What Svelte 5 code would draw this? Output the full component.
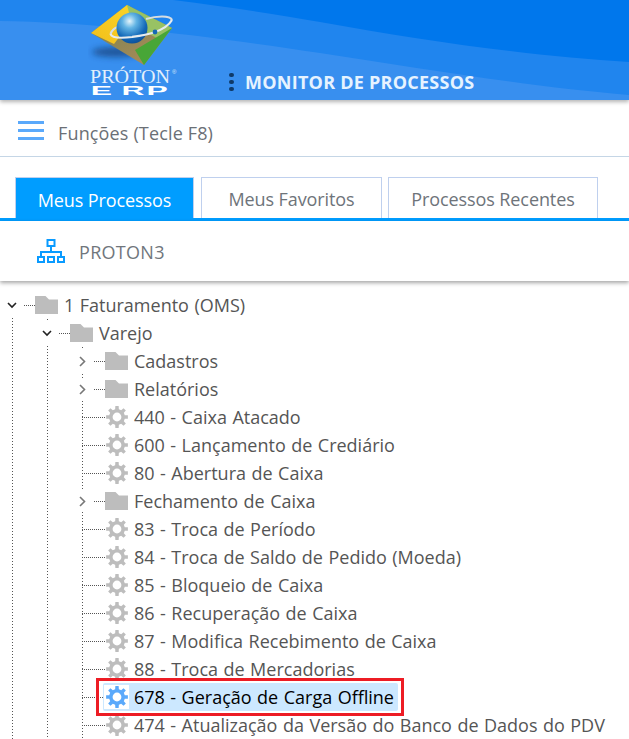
<script>
  function gearPath(cx, cy, rOuter, rRoot, rHole, teeth) {
    let d = '';
    const step = (Math.PI * 2) / teeth;
    for (let i = 0; i < teeth; i++) {
      const a = i * step - Math.PI / 2;
      const pts = [
        [rRoot, a - step * 0.3],
        [rOuter, a - step * 0.19],
        [rOuter, a + step * 0.19],
        [rRoot, a + step * 0.3]
      ];
      for (const [r, t] of pts) {
        d += (d ? 'L' : 'M') + (cx + r * Math.cos(t)).toFixed(2) + ' ' + (cy + r * Math.sin(t)).toFixed(2);
      }
    }
    d += 'Z';
    d += `M${cx + rHole} ${cy}A${rHole} ${rHole} 0 1 0 ${cx - rHole} ${cy}A${rHole} ${rHole} 0 1 0 ${cx + rHole} ${cy}Z`;
    return d;
  }
  const gear = gearPath(11, 11, 11, 8, 4.4, 8);

  const items = [
    { type: 'folder', closed: true, text: 'Cadastros' },
    { type: 'folder', closed: true, text: 'Relatórios' },
    { type: 'gear', text: '440 - Caixa Atacado' },
    { type: 'gear', text: '600 - Lançamento de Crediário' },
    { type: 'gear', text: '80 - Abertura de Caixa' },
    { type: 'folder', closed: true, text: 'Fechamento de Caixa' },
    { type: 'gear', text: '83 - Troca de Período' },
    { type: 'gear', text: '84 - Troca de Saldo de Pedido (Moeda)' },
    { type: 'gear', text: '85 - Bloqueio de Caixa' },
    { type: 'gear', text: '86 - Recuperação de Caixa' },
    { type: 'gear', text: '87 - Modifica Recebimento de Caixa' },
    { type: 'gear', text: '88 - Troca de Mercadorias' },
    { type: 'gear', selected: true, text: '678 - Geração de Carga Offline' },
    { type: 'gear', text: '474 - Atualização da Versão do Banco de Dados do PDV' }
  ];
</script>

{#snippet folderIcon()}
  <svg class="folder" viewBox="0 0 23 18" aria-hidden="true">
    <path d="M0 0H10.5L14 3.5H23V18H0Z" />
  </svg>
{/snippet}

{#snippet chevron(open)}
  <span class="toggle">
    {#if open}
      <svg width="10" height="7" viewBox="0 0 10 7" aria-hidden="true"><path class="chev-open" d="M1 1L5 5L9 1" /></svg>
    {:else}
      <svg width="7" height="11" viewBox="0 0 7 11" aria-hidden="true"><path class="chev-closed" d="M1 1L5.5 5.5L1 10" /></svg>
    {/if}
  </span>
{/snippet}

<div class="page">
  <header class="top">
    <svg class="wave" viewBox="0 0 629 100" preserveAspectRatio="none" aria-hidden="true">
      <path d="M0 21C100 22 220 38 320 53C430 70 540 88 629 95V0H0Z" fill="#2085ee" />
      <path d="M173 0C230 7 280 15 320 22C430 42 540 57 629 62V0Z" fill="#0077ec" />
    </svg>

    <svg class="logo" width="90" height="100" viewBox="88 0 90 100" role="img">
      <defs>
        <radialGradient id="globe" cx="0.42" cy="0.28" r="0.75">
          <stop offset="0" stop-color="#e4f4fb" />
          <stop offset="0.3" stop-color="#62b4e4" />
          <stop offset="0.72" stop-color="#1368b8" />
          <stop offset="1" stop-color="#0d4f96" />
        </radialGradient>
        <linearGradient id="tan" x1="0" y1="0" x2="1" y2="1">
          <stop offset="0" stop-color="#6d8052" />
          <stop offset="1" stop-color="#b58d58" />
        </linearGradient>
        <linearGradient id="yellow" x1="0" y1="1" x2="1" y2="0">
          <stop offset="0" stop-color="#f2bf1a" />
          <stop offset="1" stop-color="#fcd52a" />
        </linearGradient>
        <filter id="soft" x="-30%" y="-80%" width="160%" height="260%"><feGaussianBlur stdDeviation="3" /></filter>
      </defs>
      <ellipse cx="116" cy="52" rx="24" ry="5" fill="#0e2f5e" opacity="0.6" filter="url(#soft)" />
      <path d="M91 33L127 5L172 28L144 65Z" fill="url(#tan)" />
      <path d="M91 33L127 5L138 12L114 44Z" fill="url(#yellow)" />
      <path d="M127 5L172 28L160 40L132 24Z" fill="#98c264" />
      <path d="M135 50L172 28L144 65Z" fill="#48a637" />
      <path d="M110.5 34C112 30 114 28 118 27M146 19C156 16 170 15 172 20" fill="none" stroke="#d6dde2" stroke-width="2.2" />
      <circle cx="132" cy="28" r="15.5" fill="url(#globe)" />
      <path d="M110.5 34C112 39 124 38 132 37C145 35 165 32 172 20" fill="none" stroke="#e6ebee" stroke-width="2.2" />
      <circle cx="155" cy="32" r="2.4" fill="#1569b5" />
      <text x="90" y="83" class="logo-proton" textLength="80" lengthAdjust="spacingAndGlyphs">PRÓTON</text>
      <text x="172" y="74" class="logo-reg">®</text>
      <g transform="scale(2.45 1)">
        <text x="37 49.6 59.8" y="95" class="logo-erp">ERP</text>
      </g>
    </svg>

    <div class="title">
      <span class="kebab"><i></i><i></i><i></i></span>
      <span class="title-text">MONITOR DE PROCESSOS</span>
    </div>
  </header>

  <div class="funcoes">
    <span class="burger"><i></i><i></i><i></i></span>
    <span class="funcoes-text">Funções (Tecle F8)</span>
  </div>

  <nav class="tabs">
    <div class="tab tab-active">Meus Processos</div>
    <div class="tab tab-fav">Meus Favoritos</div>
    <div class="tab tab-rec">Processos Recentes</div>
  </nav>

  <div class="server">
    <svg class="org" width="28" height="24" viewBox="0 0 28 24" aria-hidden="true">
      <g fill="none" stroke="#0a9bff" stroke-width="2">
        <rect x="10.5" y="1" width="7" height="6" />
        <path d="M14 7V13M4 18V13H24V18" />
        <rect x="1" y="18" width="6" height="5" />
        <rect x="11" y="18" width="6" height="5" />
        <rect x="21" y="18" width="6" height="5" />
      </g>
    </svg>
    <span class="server-text">PROTON3</span>
  </div>

  <div class="tree">
    <ul class="level level-1">
      <li>
        <div class="row">
          {@render chevron(true)}
          <span class="dots short"></span>
          {@render folderIcon()}
          <span class="label">1 Faturamento (OMS)</span>
        </div>
        <ul class="level level-2">
          <li>
            <div class="row">
              {@render chevron(true)}
              <span class="dots short"></span>
              {@render folderIcon()}
              <span class="label">Varejo</span>
            </div>
            <ul class="level level-3">
              {#each items as item}
                <li>
                  <div class="row">
                    {#if item.type === 'folder'}
                      {@render chevron(false)}
                      <span class="dots short"></span>
                      {@render folderIcon()}
                      <span class="label">{item.text}</span>
                    {:else}
                      <span class="spacer"></span>
                      <span class="dots long" class:dots-sel={item.selected}></span>
                      <span class="leaf" class:selected={item.selected}>
                        <span class="gear-box">
                          <svg class="gear" width="22" height="22" viewBox="0 0 22 22" aria-hidden="true">
                            <path d={gear} fill-rule="evenodd" />
                          </svg>
                        </span>
                        <span class="label leaf-label">{item.text}</span>
                      </span>
                    {/if}
                  </div>
                </li>
              {/each}
            </ul>
          </li>
        </ul>
      </li>
    </ul>
  </div>
</div>

<style>
  :global(body) {
    margin: 0;
    background: #fff;
  }
  .page {
    width: 629px;
    height: 739px;
    overflow: hidden;
    font-family: "Open Sans", "Noto Sans", sans-serif;
    color: #555;
    background: #fff;
  }
  .top {
    position: relative;
    height: 100px;
    background: #388fef;
    display: flex;
    align-items: flex-end;
    box-shadow: 0 2px 4px rgba(0, 0, 0, 0.3);
    z-index: 2;
  }
  .wave {
    position: absolute;
    inset: 0;
    width: 100%;
    height: 100%;
  }
  .logo {
    position: relative;
    margin-left: 88px;
    flex: none;
    display: block;
  }
  .logo-proton {
    font-family: "Liberation Serif", serif;
    font-size: 19px;
    fill: #e4effb;
  }
  .logo-reg {
    font-family: "Liberation Sans", sans-serif;
    font-size: 6px;
    fill: #dfeafa;
  }
  .logo-erp {
    font-family: "Liberation Sans", sans-serif;
    font-weight: 700;
    font-size: 13px;
    fill: #fff;
  }
  .title {
    position: relative;
    display: flex;
    align-items: center;
    margin-left: 51px;
    height: 36px;
  }
  .kebab {
    display: flex;
    flex-direction: column;
    gap: 2.5px;
    width: 16px;
    align-items: flex-start;
  }
  .kebab i {
    width: 4.5px;
    height: 4.5px;
    border-radius: 50%;
    background: #0f3a68;
  }
  .title-text {
    font-weight: 700;
    font-size: 18px;
    letter-spacing: 0.25px;
    color: #e6f3ff;
    white-space: nowrap;
  }
  .funcoes {
    height: 51px;
    padding-top: 5px;
    border-bottom: 1px solid #c5d6e6;
    display: flex;
    align-items: center;
    padding-left: 18px;
  }
  .burger {
    display: flex;
    flex-direction: column;
    gap: 5px;
    width: 26px;
    margin-right: 14px;
  }
  .burger i {
    height: 3px;
    background: #5aa9fb;
  }
  .funcoes-text {
    font-size: 18px;
    letter-spacing: 0.15px;
    color: #6b7076;
    padding-top: 5px;
  }
  .tabs {
    height: 41px;
    margin-top: 20px;
    border-bottom: 3px solid #009dff;
    display: flex;
    padding-left: 15px;
    gap: 7px;
  }
  .tab {
    box-sizing: border-box;
    height: 41px;
    border: 1px solid #bfd0ee;
    border-bottom: 0;
    display: flex;
    align-items: center;
    justify-content: center;
    font-size: 18px;
    letter-spacing: -0.1px;
    color: #6e747a;
    padding-top: 1px;
  }
  .tab-active {
    width: 179px;
    background: #009dff;
    color: #fff;
    padding-top: 3px;
  }
  .tab-fav {
    width: 181px;
  }
  .tab-rec {
    width: 210px;
    margin-left: -1px;
  }
  .server {
    height: 60px;
    display: flex;
    align-items: center;
    padding-left: 37px;
    box-shadow: 0 2px 4px rgba(0, 0, 0, 0.35);
    position: relative;
    z-index: 1;
  }
  .server-text {
    font-size: 18px;
    letter-spacing: 0.3px;
    color: #70767c;
    margin-left: 14px;
    padding-top: 2px;
  }
  .tree {
    padding-top: 10px;
  }
  ul {
    list-style: none;
    margin: 0;
    padding: 0;
  }
  .level {
    background-image: repeating-linear-gradient(to bottom, #555 0 1px, transparent 1px 3px);
    background-repeat: no-repeat;
    background-size: 1px 100%;
    background-position: 12px 0;
  }
  .level-1 {
    background-position: 12px 24px;
  }
  .level-2,
  .level-3 {
    padding-left: 35px;
    background-position: 47px 0;
  }
  .row {
    height: 28px;
    display: flex;
    align-items: center;
  }
  .toggle {
    width: 24px;
    height: 22px;
    flex: none;
    display: flex;
    align-items: center;
    justify-content: center;
    background: #fff;
  }
  .chev-open {
    fill: none;
    stroke: #222;
    stroke-width: 1.6;
  }
  .chev-closed {
    fill: none;
    stroke: #777;
    stroke-width: 1.6;
  }
  .spacer {
    width: 12px;
    flex: none;
  }
  .dots {
    flex: none;
    height: 1px;
    background-image: repeating-linear-gradient(to right, #555 0 1px, transparent 1px 2px);
  }
  .short {
    width: 11px;
  }
  .long {
    width: 23px;
  }
  .dots-sel {
    width: 21px;
  }
  .folder {
    width: 23px;
    height: 18px;
    flex: none;
    fill: #bdbdbd;
  }
  .label {
    font-size: 18px;
    word-spacing: 0.8px;
    line-height: 24px;
    margin-left: 6px;
    white-space: nowrap;
    color: #555;
  }
  .leaf {
    display: flex;
    align-items: center;
    height: 28px;
  }
  .leaf-label {
    margin-left: 5px;
  }
  .gear-box {
    width: 24px;
    height: 24px;
    display: flex;
    align-items: center;
    justify-content: center;
    flex: none;
  }
  .gear {
    fill: #bdbdbd;
  }
  .selected {
    position: relative;
    background: #cce8ff;
    border-radius: 2px;
    padding-right: 4px;
    padding-left: 1px;
  }
  .selected .gear-box {
    background: #fff;
    width: 25px;
  }
  .selected .gear {
    fill: #5aa9fb;
  }
  .selected .leaf-label {
    color: #000;
  }
  .selected::after {
    content: "";
    position: absolute;
    inset: -5px -6px -5px -7px;
    border: 3px solid #ed1c24;
  }
</style>
